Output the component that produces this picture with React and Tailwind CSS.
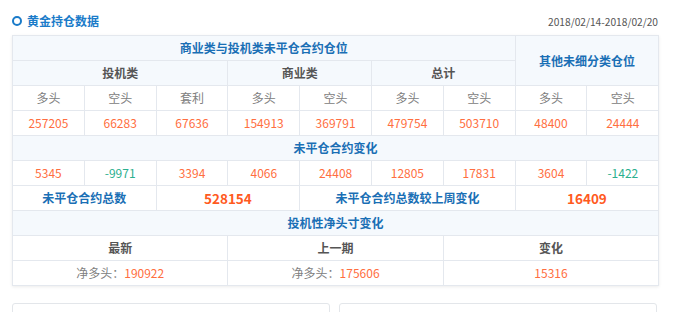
import React from "react";

const font = { fontFamily: '"Noto Sans CJK SC", "Noto Sans", sans-serif' };

const positions = [257205, 66283, 67636, 154913, 369791, 479754, 503710, 48400, 24444];
const changes = [5345, -9971, 3394, 4066, 24408, 12805, 17831, 3604, -1422];
const subHeads = ["多头", "空头", "套利", "多头", "空头", "多头", "空头", "多头", "空头"];

const td = "border border-[#e4e8ee] h-[25px] p-0 text-center";

const App = () => {
	return (
		<div className="w-[677px] h-[312px] bg-white overflow-hidden" style={font}>
			<div className="flex items-center justify-between pl-[12px] pr-[19px] pt-[12px] h-[35px] pb-[5px]">
				<div className="flex items-center">
					<span className="w-[10px] h-[10px] rounded-full border-2 border-[#1a7bc9] mr-[5px]"></span>
					<span className="text-[12px] font-bold text-[#1a7bc9]">黄金持仓数据</span>
				</div>
				<span className="text-[10.2px] text-[#555] pt-[2px]">2018/02/14-2018/02/20</span>
			</div>
			<div className="ml-[12px] w-[647px] shadow-[0_1px_3px_rgba(0,0,0,0.08)]">
				<table className="w-[647px] table-fixed border-collapse text-[12px]">
					<colgroup>
						{subHeads.map((_, i) => (
							<col key={i} className="w-[71.8px]" />
						))}
					</colgroup>
					<tbody>
						<tr className="bg-[#f5f9fd]">
							<td colSpan={7} className={`${td} font-bold text-[#1a6fb5]`}>
								商业类与投机类未平仓合约仓位
							</td>
							<td colSpan={2} rowSpan={2} className={`${td} font-bold text-[#1a6fb5]`}>
								其他未细分类仓位
							</td>
						</tr>
						<tr className="bg-[#f5f9fd]">
							<td colSpan={3} className={`${td} font-bold text-[#555]`}>投机类</td>
							<td colSpan={2} className={`${td} font-bold text-[#555]`}>商业类</td>
							<td colSpan={2} className={`${td} font-bold text-[#555]`}>总计</td>
						</tr>
						<tr>
							{subHeads.map((h, i) => (
								<td key={i} className={`${td} text-[#808080]`}>{h}</td>
							))}
						</tr>
						<tr>
							{positions.map((v, i) => (
								<td key={i} className={`${td} text-[#ff6e40]`}>{v}</td>
							))}
						</tr>
						<tr className="bg-[#f5f9fd]">
							<td colSpan={9} className={`${td} font-bold text-[#1a6fb5]`}>未平仓合约变化</td>
						</tr>
						<tr>
							{changes.map((v, i) => (
								<td
									key={i}
									className={`${td} ${v < 0 ? "text-[#2bb08e]" : "text-[#ff6e40]"}`}>
									{v}
								</td>
							))}
						</tr>
						<tr>
							<td colSpan={2} className={`${td} font-bold text-[#1a6fb5]`}>未平仓合约总数</td>
							<td colSpan={2} className={`${td} font-bold text-[13.5px] text-[#ff5a1f]`}>528154</td>
							<td colSpan={3} className={`${td} font-bold text-[#1a6fb5]`}>未平仓合约总数较上周变化</td>
							<td colSpan={2} className={`${td} font-bold text-[13.5px] text-[#ff5a1f]`}>16409</td>
						</tr>
						<tr className="bg-[#f5f9fd]">
							<td colSpan={9} className={`${td} font-bold text-[#1a6fb5]`}>投机性净头寸变化</td>
						</tr>
						<tr>
							<td colSpan={3} className={`${td} font-bold text-[#555]`}>最新</td>
							<td colSpan={3} className={`${td} font-bold text-[#555]`}>上一期</td>
							<td colSpan={3} className={`${td} font-bold text-[#555]`}>变化</td>
						</tr>
						<tr>
							<td colSpan={3} className={`${td} text-[#808080]`}>
								净多头：<span className="text-[#ff6e40]">190922</span>
							</td>
							<td colSpan={3} className={`${td} text-[#808080]`}>
								净多头：<span className="text-[#ff6e40]">175606</span>
							</td>
							<td colSpan={3} className={`${td} text-[#ff6e40]`}>15316</td>
						</tr>
					</tbody>
				</table>
			</div>
			<div className="flex gap-[9px] ml-[12px] mt-[17px]">
				<div className="w-[318px] h-[40px] rounded-[3px] border border-[#e3e6ea]"></div>
				<div className="w-[318px] h-[40px] rounded-[3px] border border-[#e3e6ea]"></div>
			</div>
		</div>
	);
};

export default App;
